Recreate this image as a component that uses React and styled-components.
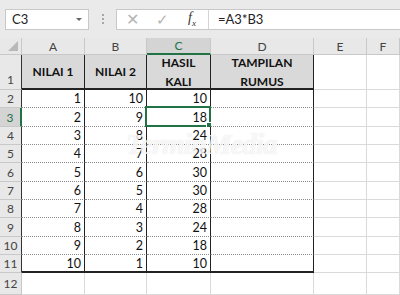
import styled, { createGlobalStyle } from 'styled-components'

const GlobalStyle = createGlobalStyle`
  html, body {
    margin: 0;
    padding: 0;
    background: #fff;
  }
  body {
    width: 400px;
    height: 295px;
    overflow: hidden;
    font-family: Lato, "Liberation Sans", sans-serif;
  }
`

const COLS = ['A', 'B', 'C', 'D', 'E', 'F']
const ROW_HEIGHTS = [35, 18, 19, 18, 18, 19, 18, 18, 19, 18, 18, 22]
const DATA = [
  [1, 10, 10],
  [2, 9, 18],
  [3, 8, 24],
  [4, 7, 28],
  [5, 6, 30],
  [6, 5, 30],
  [7, 4, 28],
  [8, 3, 24],
  [9, 2, 18],
  [10, 1, 10],
]

const Window = styled.div`
  position: relative;
  width: 400px;
  height: 295px;
  overflow: hidden;
`

const Toolbar = styled.div`
  height: 38px;
  background: #eaeaea;
  display: flex;
  align-items: center;
  padding-left: 5px;
  box-sizing: border-box;
`

const NameBox = styled.div`
  width: 84px;
  height: 21px;
  box-sizing: border-box;
  background: #fff;
  border: 1px solid #c8c8c8;
  display: flex;
  align-items: center;
  justify-content: space-between;
  padding: 0 6px 0 6px;
  font-size: 13px;
  color: #222;
`

const Caret = styled.span`
  width: 0;
  height: 0;
  border-left: 3px solid transparent;
  border-right: 3px solid transparent;
  border-top: 3px solid #666;
`

const Grip = styled.div`
  width: 27px;
  display: flex;
  flex-direction: column;
  align-items: center;
  gap: 2px;

  span {
    width: 2px;
    height: 2px;
    background: #a8a8a8;
  }
`

const FormulaBox = styled.div`
  flex: 1;
  height: 21px;
  box-sizing: border-box;
  background: #fff;
  border: 1px solid #c8c8c8;
  border-right: none;
  display: flex;
  align-items: center;
`

const FxButtons = styled.div`
  width: 92px;
  height: 100%;
  display: flex;
  align-items: center;
  border-right: 1px solid #d4d4d4;
  box-sizing: border-box;
`

const FxBtn = styled.span`
  width: 30px;
  text-align: center;
  color: ${(p) => p.$color || '#b4b4b4'};
  font-size: ${(p) => p.$size || 14}px;
  font-family: ${(p) => (p.$serif ? '"Liberation Serif", serif' : 'inherit')};
  font-style: ${(p) => (p.$serif ? 'italic' : 'normal')};
  line-height: 1;
`

const Formula = styled.div`
  padding-left: 9px;
  font-size: 13px;
  color: #222;
`

const Sheet = styled.div`
  display: grid;
  grid-template-columns: 22px 63px 62px 64px 103px 53px 33px;
  grid-template-rows: 17px ${ROW_HEIGHTS.map((h) => h + 'px').join(' ')};
  font-size: 12.5px;
`

const Corner = styled.div`
  background: #e8e8e8;
  border-right: 1px solid #c8c8c8;
  border-bottom: 1px solid #c8c8c8;
  box-sizing: border-box;
  display: flex;
  align-items: flex-end;
  justify-content: flex-end;
  padding: 0 3px 3px 0;

  span {
    width: 0;
    height: 0;
    border-left: 10px solid transparent;
    border-bottom: 10px solid #b8b8b8;
  }
`

const ColHeader = styled.div`
  background: ${(p) => (p.$active ? '#d4d4d4' : '#e8e8e8')};
  color: ${(p) => (p.$active ? '#217346' : '#444')};
  border-right: 1px solid #c8c8c8;
  border-bottom: ${(p) => (p.$active ? '2px solid #217346' : '1px solid #c8c8c8')};
  box-sizing: border-box;
  font-size: 12px;
  display: flex;
  align-items: center;
  justify-content: center;
`

const RowHeader = styled.div`
  background: ${(p) => (p.$active ? '#d4d4d4' : '#e8e8e8')};
  color: ${(p) => (p.$active ? '#217346' : '#444')};
  border-right: ${(p) =>
    p.$active ? '2px solid #217346' : p.$edge ? '1px solid #333' : '1px solid #c8c8c8'};
  border-bottom: 1px solid #c8c8c8;
  box-sizing: border-box;
  font-size: 12px;
  display: flex;
  align-items: ${(p) => (p.$tall ? 'flex-end' : 'center')};
  justify-content: center;
  padding-bottom: ${(p) => (p.$tall ? '2px' : '0')};
`

const bottomBorder = {
  head: '2px solid #222',
  dotted: '1px dotted #8a8a8a',
  end: '2px solid #222',
  grid: '1px solid #dadada',
}

const Cell = styled.div`
  position: relative;
  box-sizing: border-box;
  background: ${(p) => (p.$fill ? '#d9d9d9' : '#fff')};
  border-right: ${(p) => (p.$edge ? '1px solid #222' : '1px solid #dadada')};
  border-bottom: ${(p) => bottomBorder[p.$bottom || 'grid']};
  display: flex;
  align-items: center;
  justify-content: ${(p) => (p.$bold ? 'center' : 'flex-end')};
  text-align: center;
  padding-right: ${(p) => (p.$bold ? 0 : 3)}px;
  font-size: ${(p) => (p.$bold ? 12 : 12.5)}px;
  font-weight: ${(p) => (p.$bold ? 700 : 400)};
  line-height: 19px;
  color: #111;
`

const Selection = styled.span`
  position: absolute;
  left: -2px;
  top: -2px;
  right: -1px;
  bottom: -1px;
  border: 2px solid #217346;
  pointer-events: none;

  &::after {
    content: '';
    position: absolute;
    right: -4px;
    bottom: -4px;
    width: 5px;
    height: 5px;
    background: #217346;
    border: 1px solid #fff;
  }
`

const Watermark = styled.div`
  position: absolute;
  left: 126px;
  top: 128px;
  font-family: "Liberation Serif", serif;
  font-style: italic;
  font-weight: 700;
  font-size: 29px;
  letter-spacing: -1px;
  color: rgba(255, 255, 255, 0.75);
  text-shadow: 0 0 1px rgba(160, 160, 160, 0.35);
  pointer-events: none;
`

function HeaderRow() {
  return (
    <>
      <RowHeader $tall $edge>1</RowHeader>
      <Cell $fill $bold $edge $bottom="head">NILAI 1</Cell>
      <Cell $fill $bold $edge $bottom="head">NILAI 2</Cell>
      <Cell $fill $bold $edge $bottom="head">HASIL<br />KALI</Cell>
      <Cell $fill $bold $edge $bottom="head">TAMPILAN<br />RUMUS</Cell>
      <Cell />
      <Cell />
    </>
  )
}

export default function App() {
  return (
    <Window>
      <GlobalStyle />
      <Toolbar>
        <NameBox>
          C3
          <Caret />
        </NameBox>
        <Grip>
          <span />
          <span />
          <span />
        </Grip>
        <FormulaBox>
          <FxButtons>
            <FxBtn $size={16}>✕</FxBtn>
            <FxBtn $size={15}>✓</FxBtn>
            <FxBtn $serif $color="#333" $size={14}>
              f<sub style={{ fontSize: 9 }}>x</sub>
            </FxBtn>
          </FxButtons>
          <Formula>=A3*B3</Formula>
        </FormulaBox>
      </Toolbar>
      <Sheet>
        <Corner>
          <span />
        </Corner>
        {COLS.map((c) => (
          <ColHeader key={c} $active={c === 'C'}>
            {c}
          </ColHeader>
        ))}
        <HeaderRow />
        {DATA.map((row, i) => {
          const n = i + 2
          const last = i === DATA.length - 1
          const bottom = last ? 'end' : 'dotted'
          return [
            <RowHeader key={`h${n}`} $active={n === 3} $edge>
              {n}
            </RowHeader>,
            <Cell key={`a${n}`} $edge $bottom={bottom}>{row[0]}</Cell>,
            <Cell key={`b${n}`} $edge $bottom={bottom}>{row[1]}</Cell>,
            <Cell key={`c${n}`} $edge $bottom={bottom}>
              {row[2]}
              {n === 3 && <Selection />}
            </Cell>,
            <Cell key={`d${n}`} $edge $bottom={bottom} />,
            <Cell key={`e${n}`} />,
            <Cell key={`f${n}`} />,
          ]
        })}
        <RowHeader>12</RowHeader>
        {COLS.map((c) => (
          <Cell key={`r12${c}`} />
        ))}
      </Sheet>
      <Watermark>TerminMedia</Watermark>
    </Window>
  )
}
